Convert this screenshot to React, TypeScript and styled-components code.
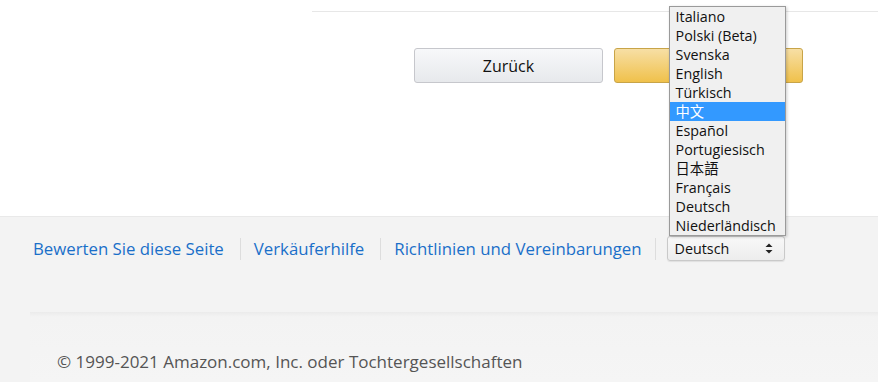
import React from 'react';
import styled, { createGlobalStyle } from 'styled-components';

const GlobalStyle = createGlobalStyle`
  html, body {
    margin: 0;
    padding: 0;
    background: #ffffff;
    font-family: "Open Sans", "Noto Sans", "Noto Sans CJK SC", sans-serif;
  }
`;

const Page = styled.div`
  width: 878px;
  height: 382px;
  overflow: hidden;
  display: flex;
  flex-direction: column;
`;

const Top = styled.div`
  height: 216px;
  background: #ffffff;
  display: flex;
  flex-direction: column;
`;

const TopRule = styled.div`
  height: 11px;
  margin-left: 312px;
  border-bottom: 1px solid #e7e7e7;
`;

const Actions = styled.div`
  display: flex;
  justify-content: flex-end;
  gap: 11px;
  padding: 36px 75px 0 0;
`;

const Button = styled.button<{ $primary?: boolean }>`
  width: 189px;
  height: 35px;
  border-radius: 3px;
  border: 1px solid ${(p) => (p.$primary ? '#c8a448' : '#c6c7cc')};
  background: ${(p) =>
    p.$primary
      ? 'linear-gradient(#f7dfa5, #f0c14b)'
      : 'linear-gradient(#f7f8fa, #e7e9ec)'};
  font-family: inherit;
  font-size: 16px;
  color: #111111;
  padding: 0;
`;

const Footer = styled.div`
  flex: 1;
  background: #f3f3f3;
  border-top: 1px solid #e9e9e9;
  display: flex;
  flex-direction: column;
`;

const LinkRow = styled.div`
  display: flex;
  align-items: center;
  padding: 19px 0 0 33px;
  height: 25px;
`;

const FooterLink = styled.a`
  color: #1a6fc9;
  font-size: 16.8px;
  text-decoration: none;
  white-space: nowrap;
`;

const Divider = styled.span<{ $tight?: boolean }>`
  width: 1px;
  height: 22px;
  background: #dddddd;
  margin: ${(p) => (p.$tight ? '0 11px 0 13px' : '0 13px 0 16px')};
`;

const SelectWrap = styled.div`
  position: relative;
`;

const Select = styled.div`
  width: 118px;
  height: 25px;
  box-sizing: border-box;
  border: 1px solid #c9c9c9;
  border-radius: 3px;
  background: linear-gradient(#f8f8f8, #ededed);
  box-shadow: 0 1px 1px rgba(0, 0, 0, 0.08);
  display: flex;
  align-items: center;
  justify-content: space-between;
  padding: 0 11px 0 7px;
  font-size: 14.3px;
  color: #111111;
`;

const Arrows = styled.svg`
  width: 8px;
  height: 11px;
`;

const Menu = styled.ul`
  position: absolute;
  left: 2px;
  bottom: 25px;
  width: 115px;
  margin: 0;
  padding: 0;
  list-style: none;
  background: #f0f0f0;
  border: 1px solid #9a9a9a;
  box-shadow: 1px 1px 3px rgba(0, 0, 0, 0.2);
  font-size: 14.3px;
  color: #111111;
`;

const Option = styled.li<{ $active?: boolean }>`
  height: 19px;
  line-height: 19px;
  padding-left: 6px;
  background: ${(p) => (p.$active ? '#3399ff' : 'transparent')};
  color: ${(p) => (p.$active ? '#ffffff' : '#111111')};
  white-space: nowrap;
`;

const BottomFill = styled.div`
  flex: 1;
  display: flex;
  margin-top: 51px;
`;

const Bottom = styled.div`
  flex: 1;
  margin-left: 30px;
  background: linear-gradient(#ebebeb, #f3f3f3 5px, #f5f5f5);
  display: flex;
  align-items: flex-end;
`;

const Copyright = styled.div`
  padding: 0 0 9px 27px;
  font-size: 17px;
  color: #555555;
`;

const languages = [
  'Italiano',
  'Polski (Beta)',
  'Svenska',
  'English',
  'Türkisch',
  '中文',
  'Español',
  'Portugiesisch',
  '日本語',
  'Français',
  'Deutsch',
  'Niederländisch',
];

export default function App() {
  return (
    <Page>
      <GlobalStyle />
      <Top>
        <TopRule />
        <Actions>
          <Button>Zurück</Button>
          <Button $primary aria-label="Weiter" />
        </Actions>
      </Top>
      <Footer>
        <LinkRow>
          <FooterLink href="#">Bewerten Sie diese Seite</FooterLink>
          <Divider />
          <FooterLink href="#">Verkäuferhilfe</FooterLink>
          <Divider />
          <FooterLink href="#">Richtlinien und Vereinbarungen</FooterLink>
          <Divider $tight />
          <SelectWrap>
            <Select>
              <span>Deutsch</span>
              <Arrows viewBox="0 0 8 11">
                <path d="M4 0.5 L7.5 4 H0.5 Z" fill="#222" />
                <path d="M4 10.5 L7.5 7 H0.5 Z" fill="#222" />
              </Arrows>
            </Select>
            <Menu>
              {languages.map((l) => (
                <Option key={l} $active={l === '中文'}>
                  {l}
                </Option>
              ))}
            </Menu>
          </SelectWrap>
        </LinkRow>
        <BottomFill>
          <Bottom>
            <Copyright>© 1999-2021 Amazon.com, Inc. oder Tochtergesellschaften</Copyright>
          </Bottom>
        </BottomFill>
      </Footer>
    </Page>
  );
}
